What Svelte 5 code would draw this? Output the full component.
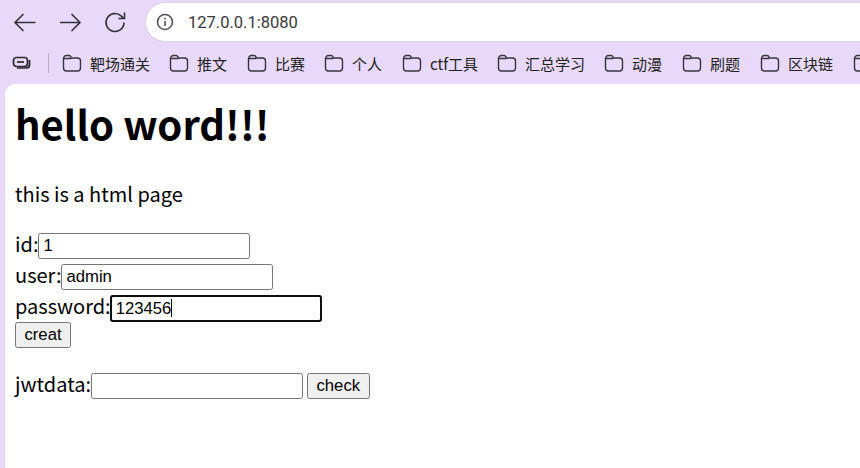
<script>
	const folders = [
		{ name: '靶场通关', width: 107 },
		{ name: '推文', width: 78 },
		{ name: '比赛', width: 77 },
		{ name: '个人', width: 78 },
		{ name: 'ctf工具', width: 95 },
		{ name: '汇总学习', width: 107 },
		{ name: '动漫', width: 78 },
		{ name: '刷题', width: 78 },
		{ name: '区块链', width: 93 },
		{ name: '', width: 20 }
	];
</script>

<div class="browser">
	<div class="toolbar">
		<div class="nav">
			<svg width="26" height="26" viewBox="0 0 26 26"><path d="M23.500 13.500H3M11.500 5L3 13.500l8.500 8.500" /></svg>
			<svg width="26" height="26" viewBox="0 0 26 26"><path d="M3 13.500h20M14.500 5l8.500 8.500-8.500 8.500" /></svg>
			<svg width="26" height="26" viewBox="0 0 26 26"><path d="M22 13.500a9 9 0 1 1-3-6.700l3 2.700M22.500 3.500v6H16.500" /></svg>
		</div>
		<div class="omnibox">
			<svg width="18" height="18" viewBox="0 0 18 18">
				<circle cx="9" cy="9" r="7.500" />
				<path d="M9 8v5" />
				<path d="M9 4.800v1.600" />
			</svg>
			<span class="url">127.0.0.1:8080</span>
		</div>
	</div>
	<div class="bookmarks">
		<svg class="tabs" width="20" height="16" viewBox="0 0 20 16">
			<rect x="1.500" y="2.500" width="14" height="9" rx="3" />
			<path d="M5 7h7" />
			<path d="M17.500 5v5a3 3 0 0 1-3 3H5" />
		</svg>
		<span class="divider"></span>
		{#each folders as folder}
			<div class="folder" style="width: {folder.width}px">
				<svg width="20" height="20" viewBox="0 0 20 20">
					<path d="M1.500 5.500a3 3 0 0 1 3-3h2.500q1.500 0 2 1.500l.3 1h6.200a3 3 0 0 1 3 3v7a3 3 0 0 1-3 3h-11a3 3 0 0 1-3-3zM1.500 5.500h7.800" />
				</svg>
				<span>{folder.name}</span>
			</div>
		{/each}
	</div>
	<main class="page">
		<h1>hello word!!!</h1>
		<p class="intro">this is a html page</p>
		<form class="create">
			<div class="row"><span>id:</span><input type="text" value="1" /></div>
			<div class="row"><span>user:</span><input type="text" value="admin" /></div>
			<div class="row tall">
				<span>password:</span>
				<div class="field">
					<input class="focused" type="text" value="123456" />
					<span class="caret"></span>
				</div>
			</div>
			<button class="submit" type="button">creat</button>
		</form>
		<form class="verify">
			<div class="row">
				<span>jwtdata:</span><input type="text" />
				<button type="button">check</button>
			</div>
		</form>
	</main>
</div>

<style>
	:global(body) {
		margin: 0;
		overflow: hidden;
		background: #e8d9fb;
	}
	.browser {
		width: 860px;
		height: 468px;
		display: flex;
		flex-direction: column;
		background: #e8d9fb;
		overflow: hidden;
		font-family: "Noto Sans CJK SC", sans-serif;
	}
	.toolbar {
		height: 42px;
		display: flex;
		align-items: flex-start;
		flex-shrink: 0;
	}
	.nav {
		display: flex;
		gap: 19px;
		padding: 9px 0 0 12px;
		width: 146px;
		box-sizing: border-box;
		flex-shrink: 0;
	}
	.nav svg path {
		fill: none;
		stroke: #333038;
		stroke-width: 1.600;
	}
	.omnibox {
		flex: 1;
		height: 38px;
		margin-top: 3px;
		background: #fff;
		border-radius: 19px 0 0 19px;
		display: flex;
		align-items: center;
		padding-left: 10px;
		gap: 14px;
		box-shadow: 0 0 0 1px #d9d3e0;
	}
	.omnibox svg circle,
	.omnibox svg path {
		fill: none;
		stroke: #55525a;
		stroke-width: 1.600;
	}
	.url {
		font-family: "Roboto", sans-serif;
		font-size: 16.500px;
		color: #3a3a3e;
	}
	.bookmarks {
		height: 42px;
		display: flex;
		align-items: center;
		flex-shrink: 0;
		padding-left: 12px;
	}
	.tabs {
		flex-shrink: 0;
	}
	.tabs rect,
	.tabs path {
		fill: none;
		stroke: #2a272e;
		stroke-width: 1.700;
	}
	.divider {
		width: 1px;
		height: 20px;
		background: #b9afc4;
		margin: 0 13px 0 16px;
		flex-shrink: 0;
	}
	.folder {
		display: flex;
		align-items: center;
		gap: 8px;
		flex-shrink: 0;
		font-size: 15px;
		color: #222;
		white-space: nowrap;
	}
	.folder svg {
		flex-shrink: 0;
	}
	.folder svg path {
		fill: none;
		stroke: #38343d;
		stroke-width: 1.400;
	}
	.page {
		flex: 1;
		margin-left: 5px;
		background: #fff;
		border-radius: 10px 0 0 0;
		padding: 0 10px;
		font-size: 20px;
		color: #000;
	}
	h1 {
		font-size: 40px;
		font-weight: 700;
		line-height: 58px;
		margin: 10px 0 0;
	}
	.intro {
		margin: 27px 0 0;
		line-height: 29px;
	}
	.create {
		margin: 25px 0 0;
		display: flex;
		flex-direction: column;
		align-items: flex-start;
		gap: 5px;
	}
	.verify {
		margin: 25px 0 0;
	}
	.row {
		display: flex;
		align-items: flex-start;
		height: 26px;
		line-height: 22px;
	}
	.tall {
		height: 27px;
	}
	.field {
		position: relative;
		display: flex;
		margin-left: -1px;
	}
	.caret {
		position: absolute;
		left: 61px;
		top: 4px;
		width: 1px;
		height: 18px;
		background: #000;
	}
	input {
		font-family: "Liberation Sans", sans-serif;
		font-size: 16.670px;
		width: 212px;
		height: 26px;
		box-sizing: border-box;
		padding: 1px 4px;
		margin: 0;
		border: 1px solid #767676;
		border-radius: 2.500px;
		background: #fff;
		color: #000;
	}
	.focused {
		height: 27px;
		padding-left: 5px;
		outline: 2px solid #101010;
		outline-offset: -2px;
		border-radius: 3px;
	}
	button {
		font-family: "Liberation Sans", sans-serif;
		font-size: 16.670px;
		height: 26px;
		padding: 1px 8.500px;
		margin: 0 0 0 4px;
		box-sizing: border-box;
		background: #efefef;
		border: 1px solid #767676;
		border-radius: 2.500px;
		color: #000;
	}
	.submit {
		margin: -5px 0 0;
	}
</style>
